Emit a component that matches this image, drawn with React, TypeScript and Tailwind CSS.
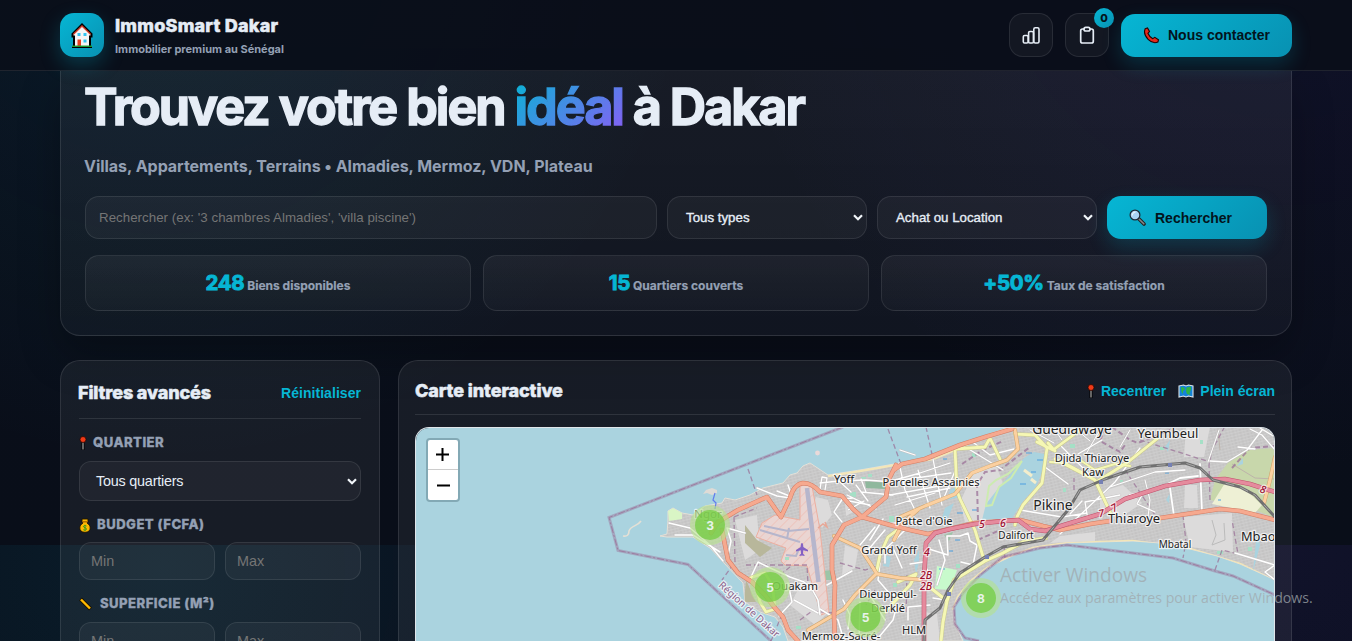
import React from "react";

const HALO = "[paint-order:stroke] [stroke:#ffffffb0] [stroke-width:2.5px] [stroke-linejoin:round]";

function House() {
  return (
    <svg width="22" height="26" viewBox="0 0 22 26">
      <path d="M1.5 12 11 2.5 20.500 12v2.500H19V25H3V14.500H1.500z" fill="#f4f4f6" stroke="#000" strokeWidth="2" />
      <path d="M2.500 12.300 11 4l8.500 8.300" fill="none" stroke="#d8402b" strokeWidth="1.300" />
      <path d="M6.500 11h3v3h-3zM12.500 11h3v3h-3zM12.500 17.500h3v3h-3z" fill="#33c3f0" />
      <path d="M6.500 17.500h3.500V24H6.500z" fill="#e8401f" />
      <path d="M1 24.300h20" stroke="#1b9a2f" strokeWidth="1.500" />
      <path d="M1 25.500h20" stroke="#000" strokeWidth="1" />
    </svg>
  );
}
function Phone() {
  return (
    <svg width="17" height="17" viewBox="0 0 17 17">
      <path d="M2.200 1.800 4.500 1l2 3.500-1.600 1.800c.9 2.300 2.600 4.200 4.900 5.400l2-1.300 3.700 2.400-.6 2.200c-3.500 1.600-7.200-.1-9.800-2.700C2.400 9.600.7 5.300 2.200 1.800z" fill="#e5291c" stroke="#200" strokeWidth="1.100" />
    </svg>
  );
}
function Loupe() {
  return (
    <svg width="17" height="17" viewBox="0 0 17 17">
      <path d="m9.500 9.500 5.500 5.500" stroke="#222" strokeWidth="3.600" strokeLinecap="round" />
      <path d="m10 10 4.800 4.800" stroke="#888" strokeWidth="1.600" strokeLinecap="round" />
      <circle cx="6" cy="6" r="4.900" fill="#a9d3f5" stroke="#1c2733" strokeWidth="1.200" />
      <path d="M3.300 6.500A3 3 0 0 1 6.500 3.200" stroke="#e8f5ff" fill="none" strokeWidth="1.200" />
    </svg>
  );
}
function Pin() {
  return (
    <svg width="8" height="15" viewBox="0 0 8 15">
      <path d="M4 5v9" stroke="#000" strokeWidth="3" />
      <path d="M4 5v8.500" stroke="#aaa" strokeWidth="1.200" />
      <circle cx="4" cy="3.500" r="3" fill="#f03a17" stroke="#2b0600" strokeWidth=".8" />
    </svg>
  );
}
function MoneyBag() {
  return (
    <svg width="12" height="15" viewBox="0 0 12 15">
      <path d="M3 1h6v2.500L8 5c2 1.200 3.200 3 3.200 5 0 2.600-1.800 4.300-5.200 4.300S.8 12.600.8 10C.8 8 2 6.200 4 5L3 3.500z" fill="#fdb900" stroke="#1e1400" strokeWidth=".9" />
      <path d="M3.500 3.800h5" stroke="#a66100" strokeWidth="1.200" />
      <path d="M7.500 8C5.800 7 4.300 7.600 4.500 8.800c.2 1 3 .8 3 2.200 0 1.200-1.800 1.500-3.200.7M6 6.800v6" fill="none" stroke="#35991e" strokeWidth="1" />
    </svg>
  );
}
function Ruler() {
  return (
    <svg width="13" height="14" viewBox="0 0 13 14">
      <path d="M1.500 2 11.500 12" stroke="#1a1200" strokeWidth="4" />
      <path d="m2 2.500 9 9" stroke="#ffb900" strokeWidth="2.400" />
    </svg>
  );
}
function WorldMap() {
  return (
    <svg width="16" height="14" viewBox="0 0 16 14">
      <path d="M1 2 5.500 1 8 2l2.500-1L15 2v11l-4.500-1L8 13l-2.500-1L1 13z" fill="#1583d8" stroke="#dbe3ea" strokeWidth="1.100" />
      <path d="m3 3 3 .5 1 2-2 1.500v3L3.500 8zM8.500 3.500l4.500-1v3l-1.500 3.500 1 2-3.500-1L8 7z" fill="#2fb344" />
    </svg>
  );
}
function Chevron() {
  return (
    <svg width="10" height="7" viewBox="0 0 10 7">
      <path d="m1 1.200 4 4 4-4" fill="none" stroke="#f1f5f9" strokeWidth="2.200" />
    </svg>
  );
}

const FIELD = "flex items-center border border-white/[0.09] bg-white/[0.04]";

function Stat({ n, label }: { n: string; label: string }) {
  return (
    <div className="flex h-14 items-center justify-center rounded-[14px] border border-white/[0.09] bg-[linear-gradient(180deg,rgba(255,255,255,0.05),rgba(255,255,255,0.025))] pt-[2px]">
      <div className="whitespace-nowrap text-[12px] font-bold leading-6 text-[#94a0b4] [-webkit-text-stroke:0.2px_#94a0b4]">
        <span className="text-[20.500px] font-bold tracking-[-0.300px] text-[#06b6d4] [-webkit-text-stroke:0.9px_#06b6d4]">{n}</span> {label}
      </div>
    </div>
  );
}

function Label({ icon, children }: { icon: React.ReactNode; children: React.ReactNode }) {
  return (
    <div className="flex h-[18px] items-center gap-[6px] whitespace-nowrap text-[13.1px] font-extrabold uppercase tracking-[0.46px] text-[#94a0b4] [-webkit-text-stroke:0.3px_#94a0b4]">
      {icon}
      {children}
    </div>
  );
}

function Range() {
  return (
    <div className="grid grid-cols-2 gap-[10px]">
      {["Min", "Max"].map((t) => (
        <div key={t} className={FIELD + " h-[38px] rounded-xl px-[11px] pt-px font-['Liberation_Sans',sans-serif] text-[14.400px] text-[#757575]"}>
          {t}
        </div>
      ))}
    </div>
  );
}

const land =
  "M668 520 668 511 673 508 682 513 693 515 705 506 722 503 725 498 735 500 750 495 763 488 783 483 790 475 797 473 803 466 810 463 819 469 828 475 860 470 900 463 933 458 957 448 980 437 1010 427 1275 427 1275 580 1260 573 1240 564 1217 556 1190 549 1160 543 1133 541 1067 543 1033 548 1010 557 987 568 970 582 958 597 953 610 955 623 963 641 788 641 783 627 775 617 760 612 745 602 743 583 723 562 710 548 693 537 667 537 660 536 667 534z";

type Road = [string, number?];
const white: Road[] = [
  ["M669 523 690 528 710 545 723 561M675 535 693 535 720 552M727 528 745 533M727 528 731 541 728 555M777 491 792 497 788 485M757 488 777 496 790 498", 1.500],
  ["M820 489 822 477 827 478 825 490M820 483 839 481 851 492M839 481 866 480 893 482M861 492 893 495M834 512 842 499 853 498 863 503M842 500 834 512 842 522M844 500 870 505M847 495 876 509M856 485 868 501M861 479 866 492M848 510 864 501", 1.300],
  ["M750 579 758 562 768 567 790 577 804 582 812 589 818 600 820 615M788 583 792 602 779 616M794 600 818 613M796 588 811 590M827 585 852 571M860 545 875 527M868 550 885 530M879 555 895 540 905 530M883 519 870 540M888 524 918 520", 1.500],
  ["M888 482 920 473 950 463M890 495 945 485M899 463 905 490 915 510M918 470 930 508M933 459 942 505M895 505 935 493M902 480 951 473M907 497 950 488M900 450 915 455M955 471 943 500M962 445 990 462 1003 470M970 440 990 455 1014 449M1045 467 1068 484M1020 510 1062 517 1087 513M1060 534 1115 482 1140 448M1078 454 1102 440M1110 487 1155 472 1185 470M1082 501 1070 514M1093 478 1060 445M1120 495 1085 502 1088 520M1142 495 1137 504 1155 512M1210 461 1227 462 1247 450 1262 430M1238 447 1255 449M1250 429 1262 435 1275 450M1260 428 1275 437", 1.300],
  ["M1130 495 1155 490 1180 478 1198 476M1170 488 1174 516M1200 464 1202 512", 1.800],
  ["M929 549 948 555 947 536 960 536 968 533 970 541 977 545 973 565 961 562M939 540 945 560 937 585M910 564 923 562 930 575M933 598 946 600M908 620 908 607 930 605M879 637 893 620 897 605M880 563 878 580 890 594 905 598M885 545 885 563M894 550 902 568M860 602 859 641M820 609 838 620 844 641M843 600 850 615 848 629M870 595 885 620M1235 553 1275 565M1275 565 1265 572 1275 580", 1.500],
  ["M1030 430 1045 438 1054 443M1055 430 1062 440M1077 430 1090 441M1100 430 1086 454M1130 430 1120 447M1145 480 1150 500 1148 517M1219 430 1208 462", 1],
];
const yellow: Road[] = [
  ["M955 449 957 491 960 499 975 530 984 560M955 449 985 447 990 438 1000 459M1015 434 1035 435 1047 448 1042 483 1023 505 1017 517 1015 525M1037 442 1053 450 1080 430M1048 443 1055 451M1055 459 1095 480 1111 514M1098 481 1128 462 1158 438", 2.800],
  ["M927 585 947 601 943 622 941 641M947 601 954 580 985 561 1003 553 1023 542 1046 538", 3],
  ["M750 578 765 573 772 585M755 582 760 602 766 612 775 609 773 590M900 528 888 537 880 555 876 574M898 582 916 574 910 585 885 612", 2.800],
  ["M1080 460 1095 470 1115 464 1130 466M1050 462 1065 463 1085 474", 2],
];
const orange: Road[] = [
  ["M834 536 860 548 870 563 877 574 900 578 925 580M876 574 855 595 844 609 808 630", 3],
  ["M900 517 925 506 955 494 972 473 990 466 1007 460 1018 449 1015 430M1275 457 1270 480 1264 503M894 540 903 523 920 508", 3],
];
const red: Road[] = [
  ["M711 533 718 522 738 510 767 497 781 517 790 498Q794 484 803 483Q812 483 820 492L842 496 853 509 862 517 890 525 910 530 928 534 975 523 1004 521 1020 520 1043 526 1060 530 1090 524 1110 521", 3.600],
  ["M889 479 896 465 889 479 886 497 862 517 844 525 832 545 832 570 835 585 834 615 835 641M894 470 902 464 925 459 960 445 985 437 1012 429", 3.600],
  ["M722 530 728 560 738 573 752 582 765 595 775 608 783 617 788 630 798 641M1160 518 1220 509 1240 511 1275 520", 3.600],
];
const motorway = "M924 641 924 580 926 543 935 533 950 529 975 524 1004 521 1018 520 1030 529 1045 531 1064 525 1100 514 1125 499 1165 486 1200 480 1225 479 1250 484 1275 492";
const railway = "M924 641 925 620 940 608 948 590 960 573 985 557 1003 547 1043 540 1068 510 1080 490 1105 479 1140 467 1185 463 1200 468 1213 480 1240 487 1255 495 1275 517";
const regionLine = "M843 427 609 517.500 618 550.500 688 564.500 771 641M979 641 965 638 955 624 954 607 963 593 980 575 1003 557 1040 548 1067 545 1100 549 1173 558 1215 571 1233 576 1275 595";
const runwayArea = "M800 485 812 486 820 530 829 612 821 615 807 566 785 565 781 561 786 548 756 537 762 523 775 515 800 520z";

function Roads({ list, edge, fill }: { list: Road[]; edge: string; fill: string }) {
  return (
    <g fill="none" strokeLinejoin="round" strokeLinecap="round">
      {list.map(([d, w = 2], i) => (
        <path key={"e" + i} d={d} stroke={edge} strokeWidth={w + 1} />
      ))}
      {list.map(([d, w = 2], i) => (
        <path key={"f" + i} d={d} stroke={fill} strokeWidth={w} />
      ))}
    </g>
  );
}

const places: [string, number, number, number][] = [
  ["Ngor", 708, 518, 11.500], ["Yoff", 844, 483, 11.200], ["Parcelles Assainies", 931, 486, 11.100],
  ["Patte d'Oie", 924, 525, 11.100], ["Grand Yoff", 889, 554, 11.100], ["Ouakam", 795, 590, 11.500],
  ["Dieuppeul-", 888, 598, 11.100], ["Derklé", 888, 612, 11.100], ["HLM", 914, 634, 11.100],
  ["Mermoz-Sacré-", 841, 640, 11.100], ["Guédiawaye", 1072, 434, 13.800], ["Yeumbeul", 1168, 438, 13],
  ["Djida Thiaroye", 1092, 462, 11.100], ["Kaw", 1093, 476, 11.100], ["Pikine", 1053, 510, 13.900],
  ["Thiaroye", 1134, 523, 12.900], ["Dalifort", 1016, 539, 10], ["Mbatal", 1175, 548, 10],
];
const shields: [string, number, number, number][] = [
  ["5", 982, 528, 0], ["6", 1003, 527, 0], ["4", 927, 556, 0], ["2B", 926, 579, 0], ["2B", 926, 590, 0],
  ["7", 1102, 517, -12], ["7", 1116, 511, -30], ["8", 1262, 493, 15],
];
const clusters: [string, number, number][] = [["3", 710, 525], ["5", 770, 587], ["5", 865.500, 617], ["8", 981, 598]];

function DakarMap() {
  return (
    <svg className="block" width="860" height="214" viewBox="415 427 860 214">
      <defs>
        <pattern id="blocks" width="7" height="6" patternUnits="userSpaceOnUse" patternTransform="rotate(-14)">
          <path d="M0 1.500h7M0 4.500h7M2 0v6M5 0v6" stroke="#d2d1d1" strokeWidth=".6" />
        </pattern>
        <pattern id="hatch" width="7" height="7" patternUnits="userSpaceOnUse" patternTransform="rotate(45)">
          <path d="M0 0v7" stroke="#efb4a8" strokeWidth="1" />
        </pattern>
        <clipPath id="landClip"><path d={land} /></clipPath>
      </defs>
      <rect x="415" y="427" width="860" height="214" fill="#aad3df" />
      <path d={land} fill="#c4c3c3" stroke="#e6e2d8" strokeWidth="1" />
      <g clipPath="url(#landClip)">
        <path d={land} fill="url(#blocks)" />
        <path d="M828 476 860 471 900 464 933 459 957 449 980 438 1010 428M953 610 958 597 970 582 987 568 1010 557 1033 548 1067 543 1133 541 1190 549 1240 564 1275 581" fill="none" stroke="#f3e6b8" strokeWidth="2.500" />
        <g fill="#dcdbdb">
          <path d="M735 520 757 515 760 550 745 560zM803 580 820 583 829 612 815 625 790 605zM845 545 858 550 855 568 842 575zM960 502 975 470 995 462 1012 508 1010 522 965 522zM845 503 851 503 853 512 846 516zM1100 492 1123 485 1142 503 1120 518 1100 508zM1185 485 1197 485 1198 508 1184 508zM1183 517 1232 513 1233 552 1190 547zM1186 427 1210 427 1204 457 1184 457zM925 612 937 614 940 641 925 641zM1060 536 1095 532 1095 541 1050 543zM816 497 828 500 832 515 822 528 812 510z" />
        </g>
        <path d="M1215 480 1230 460 1245 450 1275 448 1275 518 1255 510 1235 505 1210 500z" fill="#c8d7ab" />
        <path d="M1225 483 1245 489 1262 505 1255 513 1212 504z" fill="#eef0d5" />
        <path d="M668 511 673 508 682 513 682 519 669 521z" fill="#d9f5c5" />
        <path d="M865 481 886 482 885 489 866 488z" fill="#8fb89d" />
        <path d="M937 566 957 570 950 590 935 589z" fill="#c8facc" />
        <path d="M823 571 832 570 832 580 824 580zM944 535 953 532 949 541z" fill="#9cc5a7" />
        <path d="M745 525 757 540 772 548 760 557 745 543zM746 580 756 602 744 602z" fill="#b8b79b" />
        <path d="M982 520 986 504 1000 486 1014 470 1024 458 1034 452 1045 454 1043 470 1036 487 1024 500 1012 518z" fill="#aad3df" />
        <path d="M986 506 989 486 996 480 1008 474 1022 461 1011 478 999 487 992 505z" fill="none" stroke="#ccebb0" strokeWidth="2" />
        <path d="M1024 470 1032 476M1031 479l5 4" stroke="#f3edcc" strokeWidth="3" fill="none" />
        <path d="M945 508 954 503 948 518 941 521zM950 490 958 486 960 497 948 500zM885 555 891 557 889 567 883 566zM914 560 919 550 919 562 916 574zM1257 530 1260 545 1253 572M1237 466 1243 458 1243 464zM1165 447 1170 440 1168 452zM1166 500 1170 493 1169 503z" fill="#aad3df" />
        <path d={runwayArea} fill="#ead5d2" stroke="#ecae9f" strokeWidth="1" />
        <path d={runwayArea} fill="url(#hatch)" />
        <path d="M807 488 818.500 582" stroke="#b6b6cc" strokeWidth="4.500" />
        <path d="M760 530 800 542M764 526 788 531 809 529M789 528 787 539M786 555 796 556 799 549" fill="none" stroke="#b6b6cc" strokeWidth="2" />
        <path d="M818 528 823 524 827 527 825 522" stroke="#e8a796" strokeWidth="1.500" fill="none" />
        <g stroke="#4c9fe0" strokeWidth="1"><path d="M1026 453h6M1037 460h6M1031 472h5M1020 484h6M943 459h4M957 513h6M972 510h5M939 569h6M948 551h5M955 540h5M1165 473h4M1218 500h3M1223 509h3" /></g>
        <g fill="#a5e0c6"><path d="M861 477h5v4h-5zM850 492h6v5h-6zM868 474h4v3h-4zM889 516h5v6h-5zM972 453h4v4h-4zM785 557h4v3h-4zM796 626h5v3h-5zM893 583h4v4h-4zM956 564h4v4h-4zM1070 444h5v4h-5zM1120 480h3v4h-3zM1248 547h4v4h-4zM1063 488h3v4h-3zM1200 440h3v4h-3zM1160 447h4v3h-4zM1217 551h6v3h-6z" /></g>
        <path d="M1212 520 1216 535 1212 545 1225 540 1224 523" fill="none" stroke="#bbb" />
        <path d="M1218 430 1220 450M1232 464 1255 478 1274 479" fill="none" stroke="#bdb3aa" />
      </g>
      <g fill="none" stroke="#9b7298" opacity=".75" strokeDasharray="5 3" strokeWidth="1.300">
        <path d="M748 469 757 495M888 429 901 464M926 427 933 459M734 517 757 508M734 517 735 562 722 580M746 565 807 565 808 585M771 641 783 612M780 575 790 567M1004 545 1005 560M907 575 906 615M1183 515 1186 542 1183 558M1215 570 1222 550 1238 554 1232 520M1210 500 1209 465 1212 450 1224 428M1140 440 1210 462M1125 470 1145 500 1155 515M840 563 865 570 877 566M875 590 866 605M800 620 812 611 833 613M1074 490 1074 478" />
        <path strokeWidth="2" d="M978 540 1000 530M978 520 977 485 985 472 1000 470 1030 447M1232 468 1250 448 1275 446M1112 427 1130 440 1138 443 1170 430M1105 428 1100 441 1120 452 1125 445M962 464 983 450 1003 441" />
      </g>
      <g fill="none" stroke="#9b7298">
        <path d={regionLine} strokeWidth="3" opacity=".45" />
        <path d={regionLine} strokeWidth="1" strokeDasharray="7 2 2 2" opacity=".8" />
      </g>
      <path d="M623 536q6 1 6-5c2-6 8-4 12-10" fill="none" stroke="#e5e0d5" strokeWidth="1.600" />
      <path d="m703 494 3-4 6-2 5 2v3l-5 2-5-2z" fill="#dedbd6" />
      <path d="m715 493-2 7 3 3-1 6" stroke="#617cee" fill="none" strokeWidth="1.200" />
      <circle cx="817.500" cy="453" r="2.400" fill="#ead9d9" />
      <Roads list={white} edge="#c4c2c2" fill="#fff" />
      <Roads list={yellow} edge="#c9c98e" fill="#f5f7b4" />
      <Roads list={orange} edge="#cfa36b" fill="#fbd0a0" />
      <Roads list={red} edge="#d17c64" fill="#f6a98f" />
      <g fill="none" strokeLinejoin="round">
        <path d={motorway} stroke="#c0506c" strokeWidth="4.600" />
        <path d={motorway} stroke="#e58b9d" strokeWidth="3.600" />
        <path d={railway} stroke="#707070" strokeWidth="3" />
        <path d={railway} stroke="#b5b5b5" strokeWidth=".8" strokeDasharray="9 6" />
      </g>
      <path d="M985 555h4v4h-4zM947 592h4v4h-4zM1099 480h4v4h-4zM1168 463h4v4h-4z" fill="#7580b4" />
      <path d="M802 543c1 0 1.300 2 1.300 4l4.700 3v1.500l-4.700-1.200-.3 3.500 1.500 1.200v1l-2.500-.6-2.500.6v-1l1.500-1.200-.3-3.500-4.700 1.200V550l4.700-3c0-2 .3-4 1.300-4z" fill="#8461c4" />
      <g textAnchor="middle" className="font-['Noto_Sans','Open_Sans',sans-serif]">
        {places.map(([t, x, y, s]) => (
          <text key={t} x={x} y={y} fontSize={s} fill={t === "Ngor" ? "#666" : "#222"} className={HALO}>{t}</text>
        ))}
        <text x="1241" y="541" fontSize="12.800" textAnchor="start" fill="#222" className={HALO}>Mbao</text>
        {shields.map(([t, x, y, r], i) => (
          <text key={i} x={x} y={y} fontSize="10.500" fontStyle="italic" fontWeight="500" fill="#9c1030" transform={`rotate(${r} ${x} ${y})`} className={HALO}>{t}</text>
        ))}
        <text transform="translate(718 586) rotate(42)" textAnchor="start" fontSize="10" fill="#8d618b" className={HALO}>Région de Dakar</text>
      </g>
      {clusters.map(([n, x, y], i) => (
        <g key={i}>
          <circle cx={x} cy={y} r="20" fill="#b5e28c" opacity=".6" />
          <circle cx={x} cy={y} r="15" fill="#6ecc39" opacity=".7" />
          <text x={x} y={y + 4.500} textAnchor="middle" fontSize="12" fontWeight="700" fill="#e8f3ea" className="font-['Inter',sans-serif]">{n}</text>
        </g>
      ))}
    </svg>
  );
}

const CTA = "flex h-[43px] items-center rounded-[14px] bg-[linear-gradient(135deg,#06b6d4,#0891b2)] font-['Liberation_Sans',sans-serif] text-sm font-bold text-[#03141c] shadow-[0_8px_20px_rgba(6,182,212,0.2)]";
const HEADING = "whitespace-nowrap text-[18px] font-extrabold [-webkit-text-stroke:0.5px_#e6edf6]";

export default function App() {
  return (
    <div className="relative h-[641px] w-full overflow-hidden bg-[#0a0e1a] bg-[radial-gradient(circle_at_12%_4%,rgba(6,182,212,0.085),transparent_40%),radial-gradient(circle_at_95%_0%,rgba(100,70,237,0.08),transparent_40%),linear-gradient(180deg,#0a0e1a,#090e19)] bg-[length:100%_641px] bg-[position:0_-96px] font-['Inter',sans-serif] text-[#e6edf6]">
      <header className="relative z-10 h-[71px] border-b border-white/[0.09] bg-[#0a0e1a]/90 px-[60px]">
        <div className="flex h-[70px] items-center justify-between">
          <div className="flex items-center gap-[11px]">
            <div className="flex size-11 items-center justify-center rounded-[14px] bg-[linear-gradient(135deg,#06b6d4,#0891b2)] pr-px shadow-[0_8px_20px_rgba(6,182,212,0.25)]">
              <House />
            </div>
            <div className="-mt-[2px] whitespace-nowrap">
              <div className={HEADING + " pt-px leading-[23px] tracking-[0.22px]"}>ImmoSmart Dakar</div>
              <div className="mt-[5px] text-[11px] font-bold leading-[14px] text-[#94a0b4]">Immobilier premium au Sénégal</div>
            </div>
          </div>
          <div className="flex items-center gap-3">
            <div className="flex size-11 items-center justify-center rounded-[14px] border border-white/[0.09] bg-white/[0.04]">
              <svg width="19" height="19" viewBox="0 0 19 19" fill="none" stroke="#e6edf6" strokeWidth="1.600">
                <rect x="1.300" y="9.500" width="4.800" height="7.500" rx="1.300" /><rect x="6.600" y="5.500" width="4.800" height="11.500" rx="1.300" /><rect x="11.800" y="1.800" width="5.200" height="15.200" rx="1.500" />
              </svg>
            </div>
            <div className="relative flex size-11 items-center justify-center rounded-[14px] border border-white/[0.09] bg-white/[0.04]">
              <svg width="16" height="19" viewBox="0 0 16 19" fill="none" stroke="#e6edf6" strokeWidth="1.700">
                <path d="M5 3H3.500A1.800 1.800 0 0 0 1.700 4.800v10.400c0 1 .8 1.800 1.800 1.800h9c1 0 1.800-.8 1.800-1.800V4.800c0-1-.8-1.800-1.800-1.800H11" /><rect x="5" y="1.400" width="6" height="3.600" rx="1.800" />
              </svg>
              <span className="absolute -right-[6px] -top-[6px] flex size-5 items-center justify-center rounded-full bg-[linear-gradient(135deg,#06b6d4,#0891b2)] pt-px text-[11px] font-extrabold text-[#03141c]">0</span>
            </div>
            <div className={CTA + " w-[171px] gap-2 pl-[22px]"}>
              <Phone />
              <span className="whitespace-nowrap">Nous contacter</span>
            </div>
          </div>
        </div>
      </header>

      <main className="px-[60px]">
        <section className="h-[265px] rounded-b-[20px] border border-t-0 border-white/[0.1] bg-[linear-gradient(180deg,rgba(255,255,255,0.06),rgba(255,255,255,0.03))] px-6 shadow-[0_20px_40px_rgba(0,0,0,0.25)]">
          <h1 className="-ml-px h-[82px] whitespace-nowrap pt-[8px] text-[50.300px] font-bold leading-[56px] tracking-[-2.040px] [-webkit-text-stroke:1.3px_currentColor]">
            Trouvez votre bien <span className="-mr-[3px] bg-[linear-gradient(135deg,#06b6d4,#8b5cf6)] bg-clip-text pr-[3px] text-transparent [-webkit-text-stroke:1.3px_transparent]">idéal</span> à Dakar
          </h1>
          <p className="-ml-px h-[43px] whitespace-nowrap text-[16px] font-bold leading-[27px] tracking-[-0.025px] text-[#94a0b4]">Villas, Appartements, Terrains • Almadies, Mermoz, VDN, Plateau</p>
          <div className="grid grid-cols-[572px_200px_220px_160px] gap-[10px] font-['Liberation_Sans',sans-serif] text-[13.300px]">
            <div className={FIELD + " h-[43px] rounded-[14px] px-[13px] tracking-[0.03px] text-[#757575]"}>Rechercher (ex: '3 chambres Almadies', 'villa piscine')</div>
            <div className={FIELD + " h-[43px] justify-between rounded-[14px] pl-[18px] pr-[3px] [-webkit-text-stroke:0.35px_#e6edf6]"}>Tous types<Chevron /></div>
            <div className={FIELD + " h-[43px] justify-between rounded-[14px] pl-[18px] pr-[3px] [-webkit-text-stroke:0.35px_#e6edf6]"}>Achat ou Location<Chevron /></div>
            <div className={CTA + " gap-[9px] pl-[22px]"}><Loupe />Rechercher</div>
          </div>
          <div className="mt-4 grid grid-cols-3 gap-3">
            <Stat n="248" label="Biens disponibles" />
            <Stat n="15" label="Quartiers couverts" />
            <Stat n="+50%" label="Taux de satisfaction" />
          </div>
        </section>

        <div className="mt-6 flex gap-[18px]">
          <aside className="h-[600px] w-[320px] shrink-0 rounded-[20px] border border-white/[0.1] bg-white/[0.06] px-[18px] pt-[17px]">
            <div className="flex h-[41px] items-start justify-between border-b border-white/[0.1]">
              <h2 className={HEADING + " -ml-px leading-[30px] tracking-[-0.14px]"}>Filtres avancés</h2>
              <span className="font-['Liberation_Sans',sans-serif] text-[14px] font-bold leading-[30px] tracking-[0.05px] text-[#06b6d4]">Réinitialiser</span>
            </div>
            <div className="mt-[15px]"><Label icon={<Pin />}>Quartier</Label></div>
            <div className={FIELD + " mt-[9px] h-10 justify-between rounded-xl pl-4 pr-[3px] pt-px font-['Liberation_Sans',sans-serif] text-[14.400px] tracking-[-0.22px]"}>Tous quartiers<Chevron /></div>
            <div className="mb-2 mt-[15px]"><Label icon={<MoneyBag />}>Budget (FCFA)</Label></div>
            <Range />
            <div className="mb-[9px] mt-[15px]"><Label icon={<Ruler />}><span className="ml-[2px]">Superficie (m²)</span></Label></div>
            <Range />
          </aside>
          <section className="h-[600px] w-[894px] shrink-0 rounded-[20px] border border-white/[0.1] bg-white/[0.06] px-4 pt-4">
            <div className="flex h-[38px] items-start justify-between border-b border-white/[0.1]">
              <h2 className={HEADING + " leading-[28px] tracking-[-0.1px]"}>Carte interactive</h2>
              <div className="flex h-[28px] items-center font-['Liberation_Sans',sans-serif] text-[14px] font-bold text-[#06b6d4]">
                <Pin /><span className="ml-[6px]">Recentrer</span>
                <span className="ml-3 flex items-center gap-[6px]"><WorldMap />Plein écran</span>
              </div>
            </div>
            <div className="relative mt-3 h-[214px] overflow-hidden rounded-t-[14px] border-x border-t border-[#dfe5ea]">
              <div className="-ml-px -mt-px w-[860px]"><DakarMap /></div>
              <div className="absolute left-[10px] top-[10px] w-[34px] rounded-[4px] border-2 border-[#83a9b5] bg-white">
                <div className="flex h-[30px] items-center justify-center border-b border-[#ccc] pr-px"><svg width="13" height="13"><path d="M0 6.500h13M6.500 0v13" stroke="#000" strokeWidth="2" /></svg></div>
                <div className="flex h-[30px] items-center justify-center"><svg width="13" height="13"><path d="M0 6.500h13" stroke="#000" strokeWidth="2" /></svg></div>
              </div>
            </div>
          </section>
        </div>
      </main>

      <div className="absolute left-[1000px] top-[562px] z-20 whitespace-nowrap font-['Open_Sans',sans-serif] text-[#a0a8ac]/75">
        <div className="pt-px text-[19.100px] leading-[25px]">Activer Windows</div>
        <div className="-mt-px text-[14.180px] leading-[21px]">Accédez aux paramètres pour activer Windows.</div>
      </div>
    </div>
  );
}
